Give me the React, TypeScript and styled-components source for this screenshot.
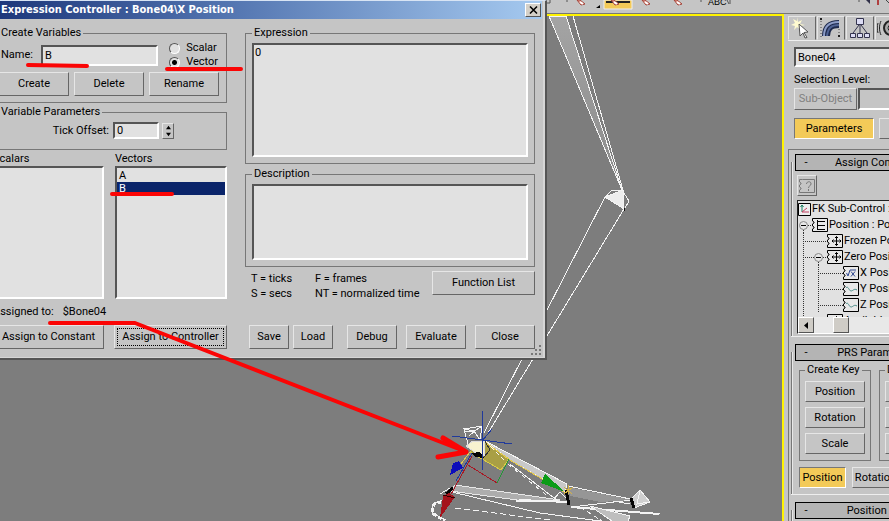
import React from "react";
import styled, { createGlobalStyle, css } from "styled-components";

const GlobalStyle = createGlobalStyle`
  * { box-sizing: border-box; }
  body {
    margin: 0;
    background: #c5c5c5;
    color: #000;
    font: 11px/14px Roboto, "Liberation Sans", Arial, sans-serif;
  }
  button, input, textarea, select { font: inherit; color: inherit; }
`;

const sunken = css`
  border: 2px solid;
  border-color: #555 #fff #fff #555;
  background: #e1e1e1;
  border-radius: 0;
`;

const Workspace = styled.div`
  position: relative;
  display: flex;
  flex-direction: column;
  height: 100vh;
  overflow: hidden;
`;

const Toolbar = styled.header`
  display: flex;
  justify-content: flex-end;
  flex: none;
  height: 14px;
  overflow: hidden;
  border-bottom: 1px solid #777;
`;

const Main = styled.main`
  display: flex;
  flex: 1;
  min-height: 0;
`;

const Viewport = styled.section`
  flex: 1;
  min-width: 0;
  overflow: hidden;
  background: #7d7d7d;
  border-top: 2px solid #fff200;
  border-right: 2px solid #fff200;
`;

const Scene = styled.svg`
  display: block;
`;

const Annotation = styled.svg`
  position: absolute;
  left: 0;
  top: 0;
  pointer-events: none;
`;

/* ---------- dialog ---------- */

const Dialog = styled.div`
  position: absolute;
  left: -14px;
  top: 0;
  width: 561px;
  background: #c5c5c5;
  border: solid;
  border-width: 1px 2px 2px 0;
  border-color: #d8e4f4 #555 #555 #d8d8d8;
  box-shadow: inset -2px -1px #d6d6d6;
`;

const TitleBar = styled.div`
  display: flex;
  align-items: center;
  justify-content: space-between;
  height: 18px;
  margin-right: 3px;
  padding: 0 1px 0 15px;
  background: linear-gradient(to right, #1a3478, #5577b2 45%, #a6caf0);
`;

const Title = styled.h1`
  margin: 0;
  color: #fff;
  font: bold 11px/18px "DejaVu Sans Condensed", "Noto Sans", sans-serif;
  white-space: nowrap;
`;

const CloseBox = styled.button`
  display: grid;
  place-items: center;
  width: 16px;
  height: 14px;
  padding: 0;
  background: #d4d0c8;
  border: 1px solid;
  border-color: #fff #555 #555 #fff;
`;

const DialogBody = styled.div`
  display: grid;
  grid-template-columns: 234px 1fr;
  column-gap: 18px;
  padding: 7px 10px 9px 7px;
`;

const Column = styled.div<{ $gap: number }>`
  display: flex;
  flex-direction: column;
  min-width: 0;
  gap: ${(p) => p.$gap}px;
`;

const Group = styled.fieldset<{ $pad: string }>`
  margin: 0;
  min-width: 0;
  padding: ${(p) => p.$pad};
  border: 1px solid #777;
  legend {
    padding: 0 2px;
    white-space: nowrap;
  }
`;

const Row = styled.div<{ $gap?: number; $height?: number }>`
  display: flex;
  align-items: center;
  gap: ${(p) => p.$gap ?? 0}px;
  height: ${(p) => (p.$height ? `${p.$height}px` : "auto")};
`;

const VariableRow = styled(Row)`
  justify-content: space-between;
  margin-bottom: 3px;
  padding: 0 0 0 2px;
`;

const Field = styled.input<{ $width: number; $height: number }>`
  ${sunken}
  width: ${(p) => p.$width}px;
  height: ${(p) => p.$height}px;
  padding: 0 2px;
  flex: none;
`;

const Radios = styled.div`
  display: flex;
  flex-direction: column;
  margin-left: 3px;
`;

const RadioLabel = styled.label`
  display: flex;
  align-items: center;
  gap: 6px;
`;

const Radio = styled.input`
  appearance: none;
  width: 11px;
  height: 11px;
  margin: 0;
  border: 1px solid;
  border-color: #555 #fff #fff #555;
  border-radius: 50%;
  background: #e1e1e1;
  &:checked {
    background: radial-gradient(circle, #000 0 2px, #e1e1e1 3px);
  }
`;

const Button = styled.button<{ $width?: number; $height?: number; $focus?: boolean; $on?: boolean; $off?: boolean }>`
  flex: none;
  width: ${(p) => (p.$width ? `${p.$width}px` : "auto")};
  height: ${(p) => p.$height ?? 24}px;
  padding: 0;
  white-space: nowrap;
  background: ${(p) => (p.$on ? "#f3ca58" : "#c5c5c5")};
  color: ${(p) => (p.$off ? "#808080" : "#000")};
  border: 1px solid;
  border-color: ${(p) => (p.$on ? "#777 #fff #fff #777" : "#e6e6e6 #666 #666 #e6e6e6")};
  ${(p) => p.$focus && "outline: 1px dotted #000; outline-offset: -4px;"}
`;

const TickRow = styled(Row)`
  justify-content: flex-end;
  padding-right: 46px;
`;

const Spinner = styled.div`
  display: flex;
  flex-direction: column;
  margin-left: 3px;
  border: 1px solid;
  border-color: #e6e6e6 #666 #666 #e6e6e6;
`;

const SpinButton = styled.button`
  display: grid;
  place-items: center;
  width: 10px;
  height: 7px;
  padding: 0;
  border: 0;
  background: none;
`;

const Lists = styled.div`
  display: grid;
  grid-template-columns: 111px 112px;
  justify-content: space-between;
`;

const ListBox = styled.ul`
  ${sunken}
  height: 133px;
  margin: 0;
  padding: 1px 0 0;
  list-style: none;
`;

const ListItem = styled.li<{ $selected?: boolean }>`
  padding-left: 2px;
  line-height: 13px;
  background: ${(p) => (p.$selected ? "#0a246a" : "transparent")};
  color: ${(p) => (p.$selected ? "#fff" : "#000")};
`;

const SpreadRow = styled.div`
  display: flex;
  justify-content: space-between;
  align-items: flex-start;
`;

const TextArea = styled.textarea<{ $height: number }>`
  ${sunken}
  display: block;
  width: 100%;
  height: ${(p) => p.$height}px;
  padding: 1px;
  resize: none;
`;

const Hints = styled.div`
  display: grid;
  grid-template-columns: 64px auto;
  padding-left: 6px;
  line-height: 15px;
`;

const HintRow = styled(SpreadRow)`
  padding-top: 1px;
`;

const ActionRow = styled.div`
  display: flex;
  justify-content: space-between;
  margin-top: auto;
  padding-left: 4px;
`;

const Grip = styled.svg`
  position: absolute;
  right: 3px;
  bottom: 2px;
`;

/* ---------- command panel ---------- */

const SidePanel = styled.aside`
  flex: none;
  width: 105px;
  padding-left: 1px;
  overflow: hidden;
`;

const PanelInner = styled.div`
  display: flex;
  flex-direction: column;
  width: 182px;
  padding-left: 3px;
`;

const Tabs = styled.nav`
  display: flex;
  gap: 1px;
  height: 27px;
  padding-top: 2px;
  border-bottom: 1px solid #eee;
`;

const Tab = styled.button`
  display: grid;
  place-items: center;
  width: 28px;
  padding: 0;
  background: #c5c5c5;
  border: 1px solid;
  border-color: #e6e6e6 #666 transparent #e6e6e6;
`;

const ObjectBox = styled.div`
  display: flex;
  flex-direction: column;
  padding: 6px 0 0 6px;
`;

const SelectionLabel = styled.label`
  padding: 6px 0 1px;
`;

const LevelSelect = styled.select`
  ${sunken}
  appearance: none;
  width: 100px;
  height: 22px;
  background: #c5c5c5;
`;

const ModeRow = styled(Row)`
  padding: 8px 0 10px;
`;

const Rollouts = styled.div`
  display: flex;
  flex-direction: column;
  gap: 7px;
  padding: 4px 0 0 2px;
  border-left: 1px solid #777;
  border-top: 1px solid #777;
`;

const Rollout = styled.section`
  position: relative;
  padding: 0 4px;
  border-bottom: 1px solid #eee;
  background: linear-gradient(#777, #777) 0 8px / 1px 100% no-repeat,
    linear-gradient(#e8e8e8, #e8e8e8) 1px 8px / 1px 100% no-repeat;
`;

const RolloutHeader = styled.button`
  display: grid;
  grid-template-columns: 12px 1fr 12px;
  align-items: center;
  width: 164px;
  height: 17px;
  padding: 0 4px;
  background: #b4b4b4;
  border: 1px solid #000;
  text-align: center;
`;

const RolloutBody = styled.div<{ $pad: string }>`
  padding: ${(p) => p.$pad};
`;

const HelpButton = styled(Button)`
  display: grid;
  place-items: center;
`;

const Tree = styled.div`
  width: 162px;
  height: 134px;
  margin-top: 4px;
  ${sunken}
  border-width: 1px;
  border-color: #222 #fff #fff #222;
`;

const TreeView = styled.div`
  height: 116px;
  overflow: hidden;
`;

const TreeRow = styled.div<{ $indent: number }>`
  display: flex;
  align-items: center;
  height: 16px;
  padding-left: ${(p) => p.$indent}px;
  white-space: nowrap;
  svg { flex: none; }
  span { margin-left: 1px; }
`;

const ScrollBar = styled.div`
  display: flex;
  height: 16px;
  background: #e8e8e8;
`;

const ScrollButton = styled.button`
  display: grid;
  place-items: center;
  width: 16px;
  padding: 0;
  background: #cfccc6;
  border: 1px solid;
  border-color: #fff #555 #555 #fff;
`;

const ScrollThumb = styled(ScrollButton)`
  margin-left: 19px;
`;

const KeyGroups = styled.div`
  display: grid;
  grid-template-columns: 72px 72px;
  column-gap: 8px;
`;

const KeyRow = styled(Row)`
  padding-top: 6px;
`;

/* ---------- drawings ---------- */

function ToolbarArt() {
  return (
    <svg width="342" height="13" viewBox="547 0 342 13">
      <path d="M547 3h3v-3M567 0v2M620 0M701 0v2M859 0v2" stroke="#555" fill="none" />
      <path d="M604 0h28v9h-28z" fill="#f3ca58" stroke="#eee" />
      <path d="M606 2h24" stroke="#222" strokeWidth="2" />
      {[577, 611, 642, 674].map((x) => (
        <g key={x}>
          <path d={`M${x} 0l3 0 5 4-4 1z`} fill="#e59b8f" stroke="#a2443a" />
          <path d={`M${x + 3} 2l3 2`} stroke="#fff" strokeWidth="2" />
        </g>
      ))}
      <path d="M600 5v3h-4z" fill="#000" />
      <text x="708" y="5" fontSize="9" fontFamily="Liberation Sans">ABC</text>
      <path d="M727 0l2 4M730 0v4" stroke="#555" />
      <path d="M866 0l4 4v-4" fill="#303048" />
      <path d="M878 0v5" stroke="#b04040" strokeWidth="2" />
      <path d="M886 0l3 3" stroke="#444" />
    </svg>
  );
}

function BoneScene() {
  return (
    <Scene width="782" height="505" viewBox="0 16 782 505" fill="none" stroke="#f4f4f4" strokeWidth="1" shapeRendering="crispEdges">
      <defs>
        <linearGradient id="bone" x1="0" y1="0" x2="0" y2="1">
          <stop offset="0" stopColor="#a4a4a4" />
          <stop offset="1" stopColor="#8a8a8a" />
        </linearGradient>
      </defs>
      <path d="M549 16L622 190 566 16z" fill="url(#bone)" />
      <path d="M573 16L623 190" />
      <path d="M605 197L612 190 622 190 629 201 624 210M605 197L484 433M624 209L488 433" />
      <path d="M605 197L623 190 624 209z" fill="#eee" />
      <path d="M624 208v3" stroke="#111" />

      <path d="M464 429L482 426 480 440 474 431 464 429 468 444M464 432L474 431 481 427M469 436L476 430" />
      <path d="M455 485L560 500 532 502 450 491z" fill="#adadad" stroke="#e8e8e8" />
      <path d="M485 441L567 484 565 492 508 459z" fill="#c8c8c8" />
      <path d="M483 441L509 459 501 470 470 452z" fill="#a99f45" stroke="#d8cb46" />
      <path d="M484 441L508 459 566 493M470 452L461 464" stroke="#e5c94e" />
      <path d="M490 446L504 460" strokeDasharray="5 3" />
      <path d="M466 446L473 441 484 441 484 456 476 453z" fill="#f7f3d0" stroke="#ddd" />
      <path d="M465 447L476 457 484 458 480 452 472 453z" fill="#050505" stroke="none" />
      <path d="M485 441L490 450 484 457" stroke="#333" />
      <path d="M568 486L635 500M568 493L630 504M571 507L632 500M510 464L558 501L515 500M553 500L560 492 568 500" />
      <path d="M508 464L550 498" strokeDasharray="4 5" />
      <path d="M568 487L632 500 600 502 570 496z" fill="#969696" stroke="none" />
      <path d="M450 488L440 494M452 492L540 513 600 521M446 499L433 504 432 513 446 520M515 501L567 502" />
      <path d="M447 500L434 504 432 513 445 521" strokeWidth="3" strokeDasharray="4 2" />
      <path d="M455 508L550 520" strokeDasharray="6 3" />
      <path d="M519 500L568 502M571 507L659 514" strokeWidth="2" />
      <path d="M590 506L630 516 628 521 612 521z" fill="#bebebe" />
      <path d="M580 507L602 521" strokeDasharray="5 3" />
      <path d="M630 500L640 490 650 502 634 508z" fill="#cfcfcf" />
      <path d="M640 490L637 504 650 502M649 514L660 513" />
      <path d="M631 498l3 10M566 490l3 15M446 494l7-6" stroke="#050505" strokeWidth="3" />
      <path d="M568 485v9M564 487l8 7M564 494l9-7" stroke="#d5b345" />

      <path d="M482 411V470M452 436L512 444M482 441L492 429" stroke="#203a9c" />
      <path d="M472 453L456 481" stroke="#203a9c" />
      <path d="M450 475L453 463 459 461 463 468z" fill="#0d0dbb" stroke="none" />
      <path d="M472 456L449 498M468 465L497 483" stroke="#a81824" />
      <path d="M497 483L509 459" stroke="#259838" />
      <path d="M440 518L443 496 449 493 455 497z" fill="#a5121b" stroke="none" />
      <path d="M443 495L455 498" stroke="#300" />
      <path d="M545 474L541 483 565 492z" fill="#0b9b17" stroke="none" />
    </Scene>
  );
}

function Marks() {
  return (
    <Annotation width="889" height="521" viewBox="0 0 889 521" fill="none" stroke="#fb0505" strokeWidth="4" strokeLinecap="round" strokeLinejoin="round">
      <path d="M28 65L87 66M167 69H241M112 194H172M50 323H135L464 451" />
      <path d="M443 438L466 452 438 457" strokeWidth="5" />
    </Annotation>
  );
}

type NodeKind = "list" | "move" | "expr" | "curve";

function NodeIcon({ kind }: { kind: NodeKind }) {
  return (
    <svg width="16" height="14" viewBox="0 0 16 14" fill="none" stroke="#000">
      <path d="M.5.5H15.500V13.500H.5V11L2 10V9L.5 8V6L2 5V4L.5 3V.5z" fill="#e8e8e8" />
      {kind === "list" && <path d="M5.500 2v10M5.500 3.500H13M5.500 7.500H13M5.500 11.500H13" />}
      {kind === "move" && (
        <path d="M9.500 2.500v9M5 7h9M8 4l1.500-1.500L11 4M8 10l1.500 1.500L11 10M6.500 5.500L5 7 6.500 8.500M12.500 5.500L14 7 12.500 8.500" />
      )}
      {kind === "expr" && <path d="M3.500 7l1.500 3 2-6h6M8 5.500l4 5M12 5.500l-4 5" stroke="#304890" />}
      {kind === "curve" && <path d="M3 6c2-3 3 3 5 3s3-3 6-1" stroke="#4a8c88" />}
    </svg>
  );
}

function Expander({ stem }: { stem?: boolean }) {
  return (
    <svg width="14" height="16" viewBox="0 0 14 16" fill="none" stroke="#555">
      <path d={stem ? "M0 8.500h2M10 8.500h4M5.500 13v3" : "M10 8.500h4M5.500 13v3"} stroke="#333" strokeDasharray="1 1" />
      <circle cx="5.500" cy="8.500" r="4" fill="#e6e6e6" stroke="#888" />
      <path d="M3 8.500h5" stroke="#000" />
    </svg>
  );
}

function Branch({ width, stem, second }: { width: number; stem: number; second?: number }) {
  return (
    <svg width={width} height="16" fill="none" stroke="#333" strokeDasharray="1 1">
      <path d={`M${stem}.5 0v16`} />
      {second !== undefined && <path d={`M${second}.5 0v16`} />}
      <path d={`M${second ?? stem} 8.500H${width}`} />
    </svg>
  );
}

const Arrow = ({ d, size = 7 }: { d: string; size?: number }) => (
  <svg width={size} height={size} viewBox="0 0 7 7">
    <path d={d} fill="#000" />
  </svg>
);

/* ---------- sections ---------- */

function ExpressionDialog() {
  return (
    <Dialog role="dialog" aria-labelledby="dialog-title">
      <TitleBar>
        <Title id="dialog-title">Expression Controller : Bone04\X Position</Title>
        <CloseBox aria-label="Close window">
          <svg width="9" height="8" viewBox="0 0 9 8">
            <path d="M1 .5L8 7.500M8 .5L1 7.500" stroke="#000" strokeWidth="1.500" />
          </svg>
        </CloseBox>
      </TitleBar>
      <DialogBody>
        <Column $gap={2}>
          <Group $pad="1px 8px 6px 5px">
            <legend>Create Variables</legend>
            <VariableRow $height={28}>
              <label htmlFor="var-name">Name:</label>
              <Field id="var-name" $width={117} $height={21} defaultValue="B" />
              <Radios>
                <RadioLabel><Radio type="radio" name="kind" />Scalar</RadioLabel>
                <RadioLabel><Radio type="radio" name="kind" defaultChecked />Vector</RadioLabel>
              </Radios>
            </VariableRow>
            <Row $gap={5}>
              <Button $width={70}>Create</Button>
              <Button $width={70}>Delete</Button>
              <Button $width={70}>Rename</Button>
            </Row>
          </Group>
          <Group $pad="3px 6px 10px 5px">
            <legend>Variable Parameters</legend>
            <TickRow $gap={4} $height={17}>
              <label htmlFor="tick">Tick Offset:</label>
              <Row>
                <Field id="tick" $width={46} $height={17} defaultValue="0" />
                <Spinner>
                  <SpinButton aria-label="Increase"><Arrow size={5} d="M3.500 1L7 6H0z" /></SpinButton>
                  <SpinButton aria-label="Decrease"><Arrow size={5} d="M3.500 6L7 1H0z" /></SpinButton>
                </Spinner>
              </Row>
            </TickRow>
          </Group>
          <Lists>
            <span id="scalars">Scalars</span>
            <span id="vectors">Vectors</span>
            <ListBox aria-labelledby="scalars" />
            <ListBox aria-labelledby="vectors">
              <ListItem>A</ListItem>
              <ListItem $selected>B</ListItem>
            </ListBox>
          </Lists>
          <Row $gap={9} $height={22}>
            <span>Assigned to:</span>
            <span>$Bone04</span>
          </Row>
          <SpreadRow>
            <Button $width={111}>Assign to Constant</Button>
            <Button $width={113} $focus>Assign to Controller</Button>
          </SpreadRow>
        </Column>
        <Column $gap={3}>
          <Group $pad="3px 6px 6px">
            <legend>Expression</legend>
            <TextArea aria-label="Expression" $height={114} defaultValue="0" />
          </Group>
          <Group $pad="3px 6px 6px">
            <legend>Description</legend>
            <TextArea aria-label="Description" $height={76} />
          </Group>
          <HintRow>
            <Hints>
              <span>T = ticks</span>
              <span>F = frames</span>
              <span>S = secs</span>
              <span>NT = normalized time</span>
            </Hints>
            <Button $width={103}>Function List</Button>
          </HintRow>
          <ActionRow>
            <Row $gap={4}>
              <Button $width={40}>Save</Button>
              <Button $width={40}>Load</Button>
            </Row>
            <Row $gap={9}>
              <Button $width={50}>Debug</Button>
              <Button $width={60}>Evaluate</Button>
              <Button $width={60}>Close</Button>
            </Row>
          </ActionRow>
        </Column>
      </DialogBody>
      <Grip width="12" height="12" viewBox="0 0 12 12" fill="#777">
        <path d="M9 1h2v2H9zM5 5h2v2H5zM9 5h2v2H9zM1 9h2v2H1zM5 9h2v2H5zM9 9h2v2H9z" />
      </Grip>
    </Dialog>
  );
}

function CommandPanel() {
  return (
    <SidePanel>
      <PanelInner>
        <Tabs aria-label="Command panels">
          <Tab aria-label="Create">
            <svg width="22" height="22" viewBox="0 0 22 22">
              <path d="M6 0l1 5 4-2-2 4 5 1-5 1 1 4-4-3-3 3 1-4-4-1 4-2-2-4 4 2z" fill="#fffbd0" />
              <path d="M8 7l9 8-4 .5 3 5-2 .5-2-5-3 3z" fill="#fff" stroke="#555" />
            </svg>
          </Tab>
          <Tab aria-label="Modify">
            <svg width="22" height="22" viewBox="0 0 22 22" fill="none">
              <path d="M6 19C6 11 10 7 19 7" stroke="#1e2a4c" strokeWidth="8" />
              <path d="M4 19C4 9 9 5 19 5" stroke="#8d9dc8" strokeWidth="2" />
              <path d="M7 19C8 11 11 8 19 8" stroke="#4f6293" strokeWidth="2" />
              <path d="M1 1v19M19 12v8" stroke="#444" strokeDasharray="1 2" />
              <path d="M0 1h2v2H0zM18 18h2v2h-2z" fill="#222" />
            </svg>
          </Tab>
          <Tab aria-label="Hierarchy">
            <svg width="22" height="22" viewBox="0 0 22 22" fill="#dcdcf4" stroke="#34344f">
              <path d="M11 8v8M10 8L4 16M12 8l6 8" />
              <path d="M7.500 1.500h7v6h-7zM1.500 16.500h5v4h-5zM8.500 16.500h5v4h-5zM15.500 16.500h5v4h-5z" />
            </svg>
          </Tab>
          <Tab aria-label="Motion">
            <svg width="24" height="20" viewBox="0 0 24 20" fill="none" stroke="#222">
              <circle cx="14" cy="10" r="7" strokeWidth="2" fill="#aaa" />
              <circle cx="14" cy="10" r="3" fill="#eee" />
              <path d="M4 3c-2 4-2 10 0 14M1 5c-1 3-1 7 0 10" />
            </svg>
          </Tab>
        </Tabs>
        <ObjectBox>
          <Field aria-label="Object name" $width={150} $height={20} defaultValue="Bone04" />
          <SelectionLabel htmlFor="level">Selection Level:</SelectionLabel>
          <Row $gap={1}>
            <Button $width={63} $height={22} $off>Sub-Object</Button>
            <LevelSelect id="level" />
          </Row>
          <ModeRow $gap={5}>
            <Button $width={80} $height={21} $on>Parameters</Button>
            <Button $width={80} $height={21}>Trajectories</Button>
          </ModeRow>
        </ObjectBox>
        <Rollouts>
          <Rollout>
            <RolloutHeader><span>-</span><span>Assign Controller</span></RolloutHeader>
            <RolloutBody $pad="4px 0 2px 2px">
              <HelpButton $width={20} $height={21} aria-label="Assign controller">
                <svg width="16" height="14" viewBox="0 0 16 14" fill="none" stroke="#777">
                  <path d="M3.500.5h12v13H.5V11L2 10V9L.5 8V6L2 5V4L.5 3V.5z" />
                  <path d="M7.500 5c0-3 5-3 4.500 0 0 2-2.500 1.500-2.500 4M9.500 10v2" />
                </svg>
              </HelpButton>
              <Tree>
                <TreeView>
                  <TreeRow $indent={0}>
                    <svg width="13" height="13" viewBox="0 0 13 13" fill="none">
                      <path d="M.5.5h12v12H.5z" fill="#eee" stroke="#000" />
                      <path d="M4 9V2M2.500 4L4 2l1.500 2" stroke="#188060" />
                      <path d="M4 9h7M4 9l5-4" stroke="#c04060" />
                    </svg>
                    <span>FK Sub-Control : </span>
                  </TreeRow>
                  <TreeRow $indent={0}><Expander /><NodeIcon kind="list" /><span>Position : Position List</span></TreeRow>
                  <TreeRow $indent={0}><Branch width={29} stem={5} /><NodeIcon kind="move" /><span>Frozen Position</span></TreeRow>
                  <TreeRow $indent={0}><Branch width={15} stem={5} /><Expander stem /><NodeIcon kind="move" /><span>Zero Position</span></TreeRow>
                  <TreeRow $indent={0}><Branch width={45} stem={5} second={20} /><NodeIcon kind="expr" /><span>X Position</span></TreeRow>
                  <TreeRow $indent={0}><Branch width={45} stem={5} second={20} /><NodeIcon kind="curve" /><span>Y Position</span></TreeRow>
                  <TreeRow $indent={0}><Branch width={45} stem={5} second={20} /><NodeIcon kind="curve" /><span>Z Position</span></TreeRow>
                  <TreeRow $indent={0}><Branch width={29} stem={5} /><NodeIcon kind="move" /><span>Available</span></TreeRow>
                </TreeView>
                <ScrollBar>
                  <ScrollButton aria-label="Scroll left"><Arrow d="M5 0v7L1 3.500z" /></ScrollButton>
                  <ScrollThumb aria-label="Scroll thumb" />
                </ScrollBar>
              </Tree>
            </RolloutBody>
          </Rollout>
          <Rollout>
            <RolloutHeader><span>-</span><span>PRS Parameters</span></RolloutHeader>
            <RolloutBody $pad="2px 0 6px 4px">
              <KeyGroups>
                {["Create Key", "Delete Key"].map((name) => (
                  <Group key={name} $pad="4px 5px 6px">
                    <legend>{name}</legend>
                    <Column $gap={5}>
                      <Button $height={21}>Position</Button>
                      <Button $height={21}>Rotation</Button>
                      <Button $height={21}>Scale</Button>
                    </Column>
                  </Group>
                ))}
              </KeyGroups>
              <KeyRow $gap={6}>
                <Button $width={47} $height={21} $on>Position</Button>
                <Button $width={47} $height={21}>Rotation</Button>
                <Button $width={47} $height={21}>Scale</Button>
              </KeyRow>
            </RolloutBody>
          </Rollout>
          <Rollout>
            <RolloutHeader><span>-</span><span>Position List</span></RolloutHeader>
            <RolloutBody $pad="8px 0" />
          </Rollout>
        </Rollouts>
      </PanelInner>
    </SidePanel>
  );
}

export default function App() {
  return (
    <Workspace>
      <GlobalStyle />
      <Toolbar><ToolbarArt /></Toolbar>
      <Main>
        <Viewport><BoneScene /></Viewport>
        <CommandPanel />
      </Main>
      <ExpressionDialog />
      <Marks />
    </Workspace>
  );
}
